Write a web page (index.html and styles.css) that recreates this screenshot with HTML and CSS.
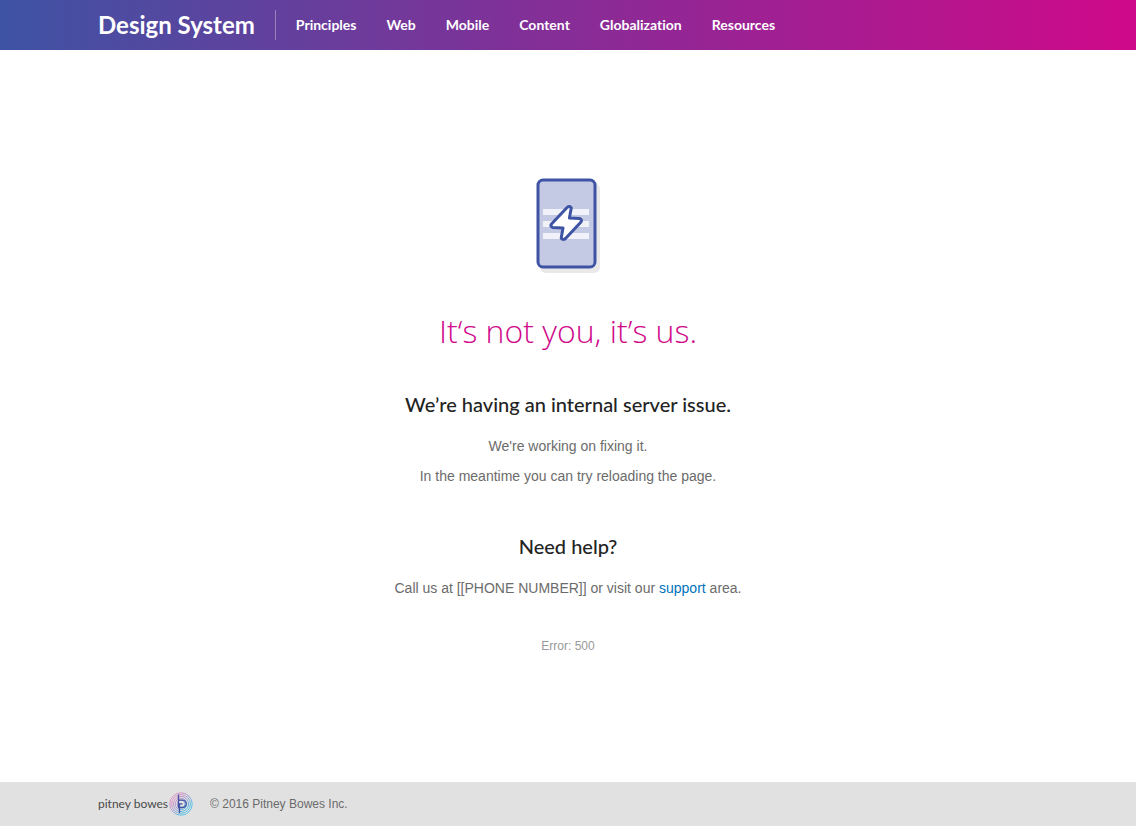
FILE: index.html
```
<!DOCTYPE html>
<html lang="en">
<head>
<meta charset="utf-8">
<meta name="viewport" content="width=device-width, initial-scale=1">
<title>Design System</title>
<link rel="stylesheet" href="styles.css">
</head>
<body>
<header class="site-header">
  <div class="container header-row">
    <a class="brand" href="#">Design System</a>
    <nav class="main-nav" aria-label="Main">
      <a href="#">Principles</a>
      <a href="#">Web</a>
      <a href="#">Mobile</a>
      <a href="#">Content</a>
      <a href="#">Globalization</a>
      <a href="#">Resources</a>
    </nav>
  </div>
</header>
<main class="message">
  <svg class="server-icon" width="64" height="96" viewBox="0 0 64 96" aria-hidden="true">
    <rect x="4" y="5" width="60" height="90" rx="6" fill="#e9e9e9"/>
    <rect x="2" y="2" width="57" height="87" rx="5" fill="#c5cae4" stroke="#3e53a4" stroke-width="3"/>
    <path d="M7 31h46v6H7zM7 43h46v6H7zM7 55h46v6H7z" fill="#f1f2f9"/>
    <path d="M31.300 29.300Q33.500 27.400 35.300 29.800L33.400 40L43.500 40.500Q46.500 41.500 45 44L29.500 60.500Q27 62.500 25.200 60L27 49.900L16.500 49.400Q13.800 48.300 15.500 46Z" fill="#fff" stroke="#3e53a4" stroke-width="3" stroke-linejoin="round"/>
  </svg>
  <h1>It‘s not you, it’s us.</h1>
  <section>
    <h2>We’re having an internal server issue.</h2>
    <p>We're working on fixing it.</p>
    <p>In the meantime you can try reloading the page.</p>
  </section>
  <section>
    <h2>Need help?</h2>
    <p>Call us at [[PHONE NUMBER]] or visit our <a href="#">support</a> area.</p>
  </section>
  <p class="error-code">Error: 500</p>
</main>
<footer class="site-footer">
  <div class="container footer-row">
    <a class="company" href="#">
      <span>pitney bowes</span>
      <svg width="24" height="24" viewBox="0 0 24 24" aria-hidden="true">
        <defs>
          <linearGradient id="rings" gradientUnits="userSpaceOnUse" x1="3" y1="3" x2="21" y2="21">
            <stop offset=".2" stop-color="#d87fbd"/>
            <stop offset=".5" stop-color="#8c8fd0"/>
            <stop offset=".8" stop-color="#35b8e8"/>
          </linearGradient>
        </defs>
        <g fill="none" stroke="url(#rings)" stroke-width="0.800">
          <circle cx="12" cy="12" r="11.200"/><circle cx="12" cy="12" r="9.400"/><circle cx="12" cy="12" r="7.600"/><circle cx="12" cy="12" r="5.800"/><circle cx="12" cy="12" r="4"/>
        </g>
        <path d="M9.500 2.500V15.500H13.500a3.700 3.700 0 0 0 0-7.400H9.500M10.500 21V11.800H13.500" fill="none" stroke="#3e53a4" stroke-width="1.300"/>
      </svg>
    </a>
    <span>© 2016 Pitney Bowes Inc.</span>
  </div>
</footer>
</body>
</html>
```
FILE: styles.css
```
* {
  box-sizing: border-box;
}

body {
  display: flex;
  flex-direction: column;
  min-height: 100vh;
  margin: 0;
  padding-bottom: 1px;
  background: #fff;
  color: #6b6b6b;
  font: 14px/20px "Liberation Sans", Arial, sans-serif;
}

a {
  color: #0072bc;
  text-decoration: none;
}

.container {
  width: 100%;
  max-width: 980px;
  margin: 0 auto;
  padding: 0 20px;
}

.site-header {
  background: linear-gradient(90deg, #3e53a4 0%, #6f3a9b 33%, #a11f92 69%, #cf0989 100%);
  font-family: Lato, sans-serif;
  font-variant-ligatures: none;
}

.header-row {
  display: flex;
  align-items: center;
  height: 50px;
}

.brand {
  padding-right: 20px;
  border-right: 1px solid rgba(255, 255, 255, 0.35);
  color: #fff;
  font-size: 24px;
  font-weight: 700;
  line-height: 30px;
  white-space: nowrap;
}

.main-nav {
  display: flex;
  flex-wrap: wrap;
  gap: 0 30px;
  padding-left: 20px;
}

.main-nav a {
  color: #fff;
  font-size: 14px;
  font-weight: 700;
}

.message {
  flex: 1;
  padding: 128px 20px 40px;
  text-align: center;
}

.server-icon {
  display: block;
  margin: 0 auto;
}

.message h1,
.message h2 {
  margin: 0;
  font-family: Lato, sans-serif;
}

.message h1 {
  margin: 35px 0 36px;
  color: #cf0989;
  font-family: "Open Sans", sans-serif;
  font-size: 32px;
  font-weight: 300;
  line-height: 44px;
}

.message h2 {
  margin-bottom: 17px;
  color: #232323;
  font-size: 20px;
  font-weight: 500;
  line-height: 30px;
}

.message p {
  margin: 0 0 10px;
}

.message section {
  margin-bottom: 45px;
}

.message section:last-of-type {
  margin-bottom: 38px;
}

.message .error-code {
  color: #999;
  font-size: 12px;
}

.site-footer {
  background: #e1e1e1;
  font-size: 12px;
}

.footer-row {
  display: flex;
  align-items: center;
  gap: 17px;
  height: 44px;
}

.company {
  display: flex;
  align-items: center;
  gap: 1px;
  color: #4a4a4a;
  font-family: Lato, sans-serif;
}
```
